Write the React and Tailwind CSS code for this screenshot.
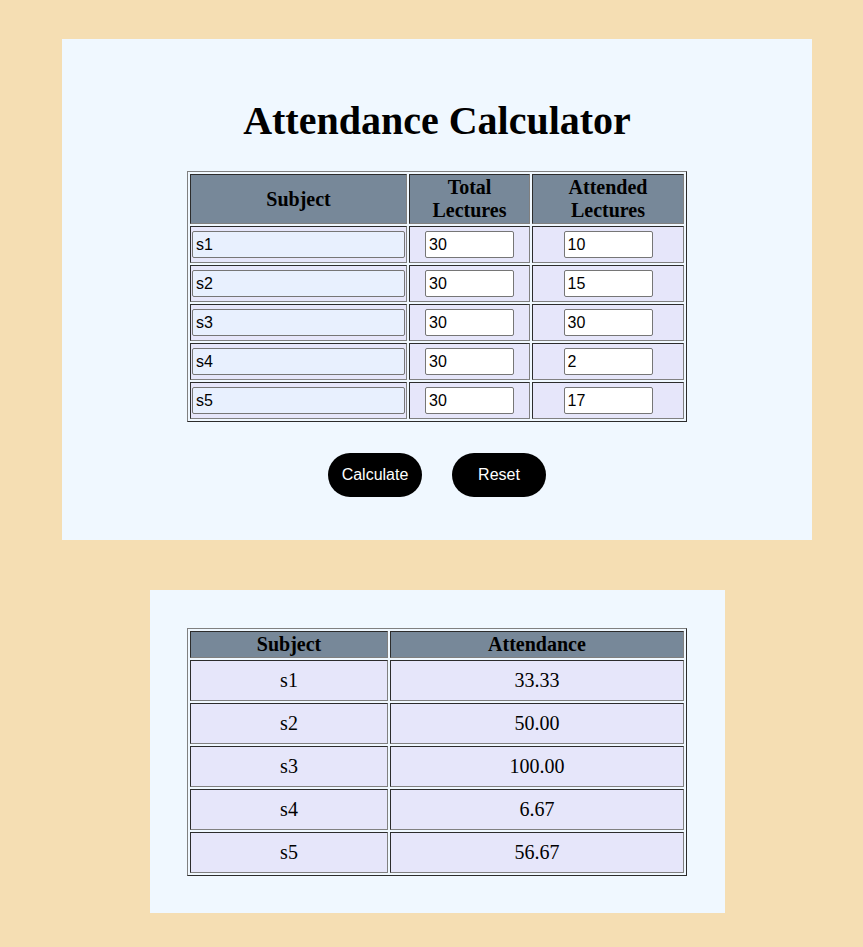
import React, { useState } from 'react';

const initialRows = [
  { name: 's1', total: '30', attended: '10' },
  { name: 's2', total: '30', attended: '15' },
  { name: 's3', total: '30', attended: '30' },
  { name: 's4', total: '30', attended: '2' },
  { name: 's5', total: '30', attended: '17' },
];

const tableCls =
  'border border-[gray] [border-style:outset] border-separate border-spacing-[2px] font-["Liberation_Serif",serif]';
const cellCls = 'border border-[gray] [border-style:inset]';

const calc = (rows) =>
  rows.map((r) => ({
    name: r.name,
    pct: ((Number(r.attended) / Number(r.total)) * 100).toFixed(2),
  }));

export default function App() {
  const [rows, setRows] = useState(initialRows);
  const [results, setResults] = useState(calc(initialRows));

  const update = (i, key, value) => {
    const next = rows.map((r, j) => (j === i ? { ...r, [key]: value } : r));
    setRows(next);
  };

  return (
    <div className="min-h-[947px] bg-[#f5deb3] pl-[11px] pt-[39px] pb-[33px] flex flex-col items-center gap-[50px] text-black">
      {/* Input panel */}
      <div className="w-[750px] bg-[#f0f8ff] pt-[59px] pb-[43px] flex flex-col items-center">
        <h1 className="font-['Liberation_Serif',serif] font-bold text-[40px] leading-[46px] mb-[27px]">
          Attendance Calculator
        </h1>
        <table className={`${tableCls} w-[500px] table-fixed`}>
          <thead>
            <tr>
              <th className={`${cellCls} w-[217px] bg-[#778899] text-[20px] leading-[23px] py-[1px]`}>
                Subject
              </th>
              <th className={`${cellCls} w-[121px] bg-[#778899] text-[20px] leading-[23px] py-[1px]`}>
                Total
                <br />
                Lectures
              </th>
              <th className={`${cellCls} bg-[#778899] text-[20px] leading-[23px] py-[1px]`}>
                Attended
                <br />
                Lectures
              </th>
            </tr>
          </thead>
          <tbody>
            {rows.map((r, i) => (
              <tr key={i}>
                <td className={`${cellCls} bg-[#e6e6fa] px-[1px] py-[4px]`}>
                  <input
                    value={r.name}
                    onChange={(e) => update(i, 'name', e.target.value)}
                    className="block w-full h-[27px] bg-[#e8f0fe] border border-[#767676] rounded-[2px] px-[3px] font-['Liberation_Sans',sans-serif] text-[16px] outline-none"
                  />
                </td>
                <td className={`${cellCls} bg-[#e6e6fa] px-[1px] py-[4px] text-center`}>
                  <input
                    value={r.total}
                    onChange={(e) => update(i, 'total', e.target.value)}
                    className="w-[89px] h-[27px] bg-white border border-[#767676] rounded-[2px] px-[3px] font-['Liberation_Sans',sans-serif] text-[16px] outline-none align-middle"
                  />
                </td>
                <td className={`${cellCls} bg-[#e6e6fa] px-[1px] py-[4px] text-center`}>
                  <input
                    value={r.attended}
                    onChange={(e) => update(i, 'attended', e.target.value)}
                    className="w-[89px] h-[27px] bg-white border border-[#767676] rounded-[2px] px-[3px] font-['Liberation_Sans',sans-serif] text-[16px] outline-none align-middle"
                  />
                </td>
              </tr>
            ))}
          </tbody>
        </table>
        <div className="mt-[31px] flex gap-[30px]">
          <button
            onClick={() => setResults(calc(rows))}
            className="w-[94px] h-[44px] rounded-full bg-black text-white font-['Liberation_Sans',sans-serif] text-[16px]"
          >
            Calculate
          </button>
          <button
            onClick={() => {
              setRows(initialRows.map((r) => ({ ...r, total: '', attended: '' })));
              setResults([]);
            }}
            className="w-[94px] h-[44px] rounded-full bg-black text-white font-['Liberation_Sans',sans-serif] text-[16px]"
          >
            Reset
          </button>
        </div>
      </div>

      {/* Results panel */}
      <div className="w-[575px] bg-[#f0f8ff] pt-[38px] pb-[37px] flex flex-col items-center">
        <table className={`${tableCls} w-[500px] table-fixed`}>
          <thead>
            <tr>
              <th className={`${cellCls} w-[198px] bg-[#778899] text-[20px] leading-[23px] py-[1px]`}>
                Subject
              </th>
              <th className={`${cellCls} bg-[#778899] text-[20px] leading-[23px] py-[1px]`}>
                Attendance
              </th>
            </tr>
          </thead>
          <tbody>
            {results.map((r, i) => (
              <tr key={i}>
                <td className={`${cellCls} bg-[#e6e6fa] text-center text-[20px] leading-[23px] py-[8px]`}>
                  {r.name}
                </td>
                <td className={`${cellCls} bg-[#e6e6fa] text-center text-[20px] leading-[23px] py-[8px]`}>
                  {r.pct}
                </td>
              </tr>
            ))}
          </tbody>
        </table>
      </div>
    </div>
  );
}
